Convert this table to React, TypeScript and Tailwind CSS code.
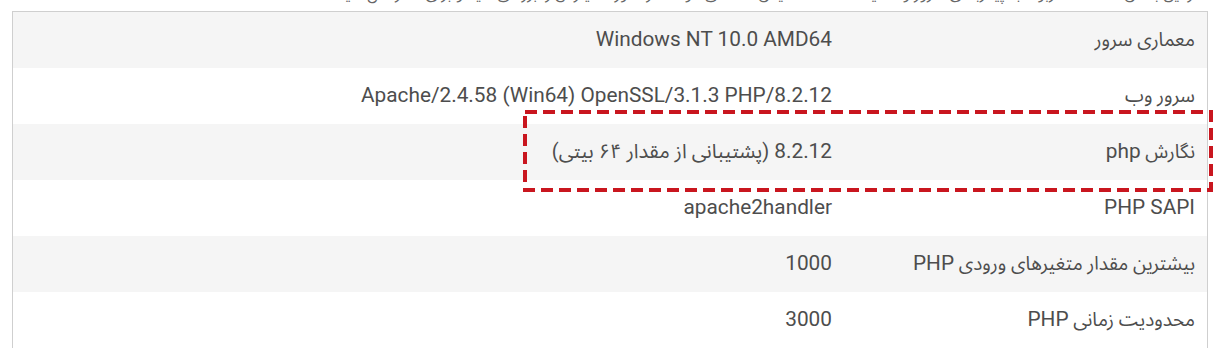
type Seg = { t: string; latin?: boolean }

const rows: { label: Seg[]; value: Seg[] }[] = [
  { label: [{ t: 'معماری سرور' }], value: [{ t: 'Windows NT 10.0 AMD64', latin: true }] },
  { label: [{ t: 'سرور وب' }], value: [{ t: 'Apache/2.4.58 (Win64) OpenSSL/3.1.3 PHP/8.2.12', latin: true }] },
  { label: [{ t: 'نگارش ' }, { t: 'php', latin: true }], value: [{ t: '8.2.12', latin: true }, { t: '\u00a0(پشتیبانی از مقدار ۶۴ بیتی)' }] },
  { label: [{ t: 'PHP SAPI', latin: true }], value: [{ t: 'apache2handler', latin: true }] },
  { label: [{ t: 'بیشترین مقدار متغیرهای ورودی ' }, { t: 'PHP', latin: true }], value: [{ t: '1000', latin: true }] },
  { label: [{ t: 'محدودیت زمانی ' }, { t: 'PHP', latin: true }], value: [{ t: '3000', latin: true }] },
]

function Text({ segs }: { segs: Seg[] }) {
  return (
    <>
      {segs.map((s, i) =>
        s.latin ? (
          <span key={i} className="text-[20.8px]" dir="ltr">{s.t}</span>
        ) : (
          <span key={i}>{s.t}</span>
        ),
      )}
    </>
  )
}

export default function App() {
  return (
    <div
      dir="rtl"
      className="w-[1217px] h-[351px] overflow-hidden bg-white text-[#4d4d4d]"
      style={{ fontFamily: 'Roboto, "Noto Sans Arabic", "DejaVu Sans", sans-serif' }}
    >
      {/* cut-off intro line */}
      <div className="h-[11px] overflow-hidden">
        <p className="-mt-[19px] pr-[16px] text-[16px] leading-[25px] text-[#666] whitespace-nowrap">
          در این بخش اطلاعات مربوط به پیکربندی سرور و تنظیمات PHP نمایش داده می‌شود تا در صورت نیاز آن را بررسی کنید و برای ما ارسال کنید
        </p>
      </div>

      <div className="relative mr-[9px] ml-[12px] border border-[#cfcfcf] border-b-0">
        {rows.map((r, i) => (
          <div
            key={i}
            className={`grid grid-cols-[363px_1fr] h-[56px] items-center ${i % 2 === 0 ? 'bg-[#f5f5f5]' : 'bg-white'}`}
          >
            <div className="pr-[12px] text-[19px] whitespace-nowrap">
              <Text segs={r.label} />
            </div>
            <div className="pr-[12px] text-[20px] whitespace-nowrap">
              <Text segs={r.value} />
            </div>
          </div>
        ))}

        {/* annotation box */}
        <svg className="absolute left-[510px] top-[98px] pointer-events-none" width="690" height="82">
          <rect
            x="2"
            y="2"
            width="686"
            height="78"
            fill="none"
            stroke="#c9161f"
            strokeWidth="4"
            strokeDasharray="12 6"
          />
        </svg>
      </div>
    </div>
  )
}
